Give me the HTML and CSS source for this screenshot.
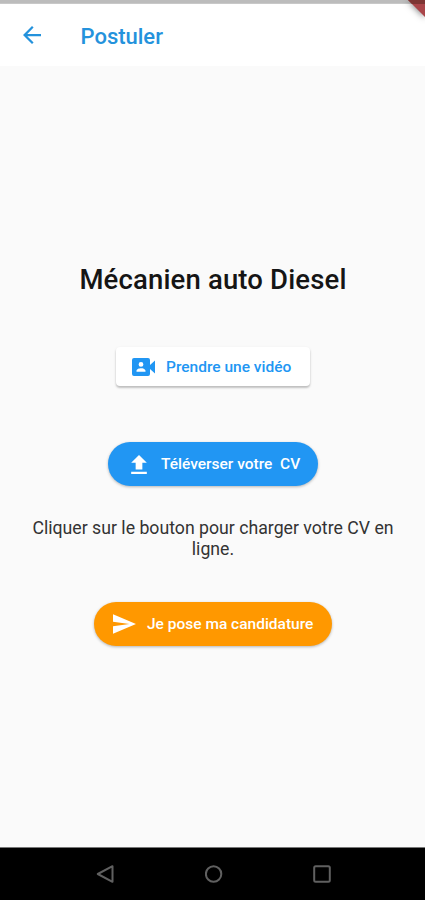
FILE: index.html
```html
<!DOCTYPE html>
<html lang="fr">
<head>
<meta charset="utf-8">
<title>Postuler</title>
<link rel="stylesheet" href="styles.css">
</head>
<body>
<div class="screen">
  <div class="status-bar"></div>
  <svg class="corner" viewBox="0 0 25 28"><path class="corner-red" d="M8 0H25V17Z"/><path class="corner-dark" d="M8 0H25V4H12Z"/></svg>
  <header class="app-bar">
    <svg class="back" viewBox="4 4 16 16"><path d="M20 11H7.83l5.59-5.59L12 4l-8 8 8 8 1.41-1.41L7.83 13H20z"/></svg>
    <h1 class="page-title">Postuler</h1>
  </header>
  <main class="content">
    <h2 class="job">Mécanien auto Diesel</h2>
    <button class="btn video">
      <svg class="icon-video" viewBox="0 0 24 18"><path fill-rule="evenodd" d="M2 0H16Q18 0 18 2V7L23 2.5V15.5L18 11V16Q18 18 16 18H2Q0 18 0 16V2Q0 0 2 0ZM9 4a2.4 2.4 0 1 0 0 4.8A2.4 2.4 0 1 0 9 4ZM4.500 13.800H13.500V12.700C13.500 11 10.500 10.200 9 10.200S4.500 11 4.500 12.700Z"/></svg>
      <span>Prendre une vidéo</span>
    </button>
    <button class="btn upload">
      <svg class="icon-upload" viewBox="5 3 14 17"><path d="M9 16h6v-6h4l-7-7-7 7h4zm-4 2h14v2H5z"/></svg>
      <span>Téléverser votre&nbsp; CV</span>
    </button>
    <p class="hint">Cliquer sur le bouton pour charger votre CV en ligne.</p>
    <button class="btn apply">
      <svg class="icon-send" viewBox="2 3 21 18"><path d="M2.010 21L23 12 2.010 3 2 10l15 2-15 2z"/></svg>
      <span>Je pose ma candidature</span>
    </button>
  </main>
  <nav class="nav-bar">
    <svg viewBox="0 0 18 18"><path d="M16.500 1.200V16.800L1.800 9Z"/></svg>
    <svg viewBox="0 0 18 18"><circle cx="8.600" cy="9" r="7.700"/></svg>
    <svg viewBox="0 0 18 18"><rect x="1.200" y="1.200" width="15.600" height="15.600" rx="1.500"/></svg>
  </nav>
</div>
</body>
</html>
```
FILE: styles.css
```css
* { box-sizing: border-box; }
body { margin: 0; font-family: Roboto, sans-serif; background: #fafafa; }
.screen { position: relative; display: flex; flex-direction: column; width: 425px; height: 900px; overflow: hidden; background: #fafafa; }
.status-bar { height: 4px; background: #bcbcbc; border-bottom: 1px solid #c8c8c8; }
.corner { position: absolute; top: 0; right: 0; width: 25px; height: 28px; filter: drop-shadow(0 1px 3px rgba(0,0,0,.5)); }
.corner-red { fill: #a94549; }
.corner-dark { fill: #7d3533; }
.app-bar { display: flex; align-items: center; height: 62px; padding-left: 23px; background: #fff; }
.back { width: 18px; height: 18px; fill: #2492dc; }
.page-title { margin: 2px 0 0 39.5px; font-size: 22px; font-weight: 500; color: #2492dc; }
.content { display: flex; flex: 1; flex-direction: column; align-items: center; padding-left: 1px; }
.job { margin: 196px 0 0; font-size: 27.5px; line-height: 36px; font-weight: 500; letter-spacing: .15px; color: #151515; white-space: nowrap; }
.btn { display: flex; align-items: center; border: 0; padding: 0; font-family: inherit; font-size: 15.500px; font-weight: 500; white-space: nowrap; color: #fff; }
.btn svg { flex: none; fill: currentColor; }
.video { width: 194px; height: 39px; margin-top: 49px; padding-left: 16px; border-radius: 4px; background: #fff; color: #2196f3; box-shadow: 0 2px 2px rgba(0,0,0,.18), 0 1px 3px rgba(0,0,0,.1); }
.upload { width: 210px; height: 44px; margin-top: 56px; padding-left: 23px; border-radius: 22px; background: #2196f3; box-shadow: 0 1px 3px rgba(0,0,0,.28); }
.apply { width: 238px; height: 44px; margin-top: 42px; padding-left: 19px; border-radius: 22px; background: #ff9800; box-shadow: 0 1px 3px rgba(0,0,0,.28); }
.icon-video { width: 24px; height: 18px; margin-right: 10px; }
.icon-upload { width: 16px; height: 19px; margin-right: 14px; }
.icon-send { width: 23px; height: 20px; margin-right: 11px; }
.hint { width: 390px; margin: 32px 0 0; font-size: 17.7px; line-height: 21px; color: #333; text-align: center; }
.nav-bar { display: flex; height: 53px; padding: 0 94px 0 96px; align-items: center; justify-content: space-between; border-top: 1px solid #777; background: #000; }
.nav-bar svg { width: 18px; height: 18px; fill: none; stroke: #606060; stroke-width: 2; stroke-linejoin: round; }
```
